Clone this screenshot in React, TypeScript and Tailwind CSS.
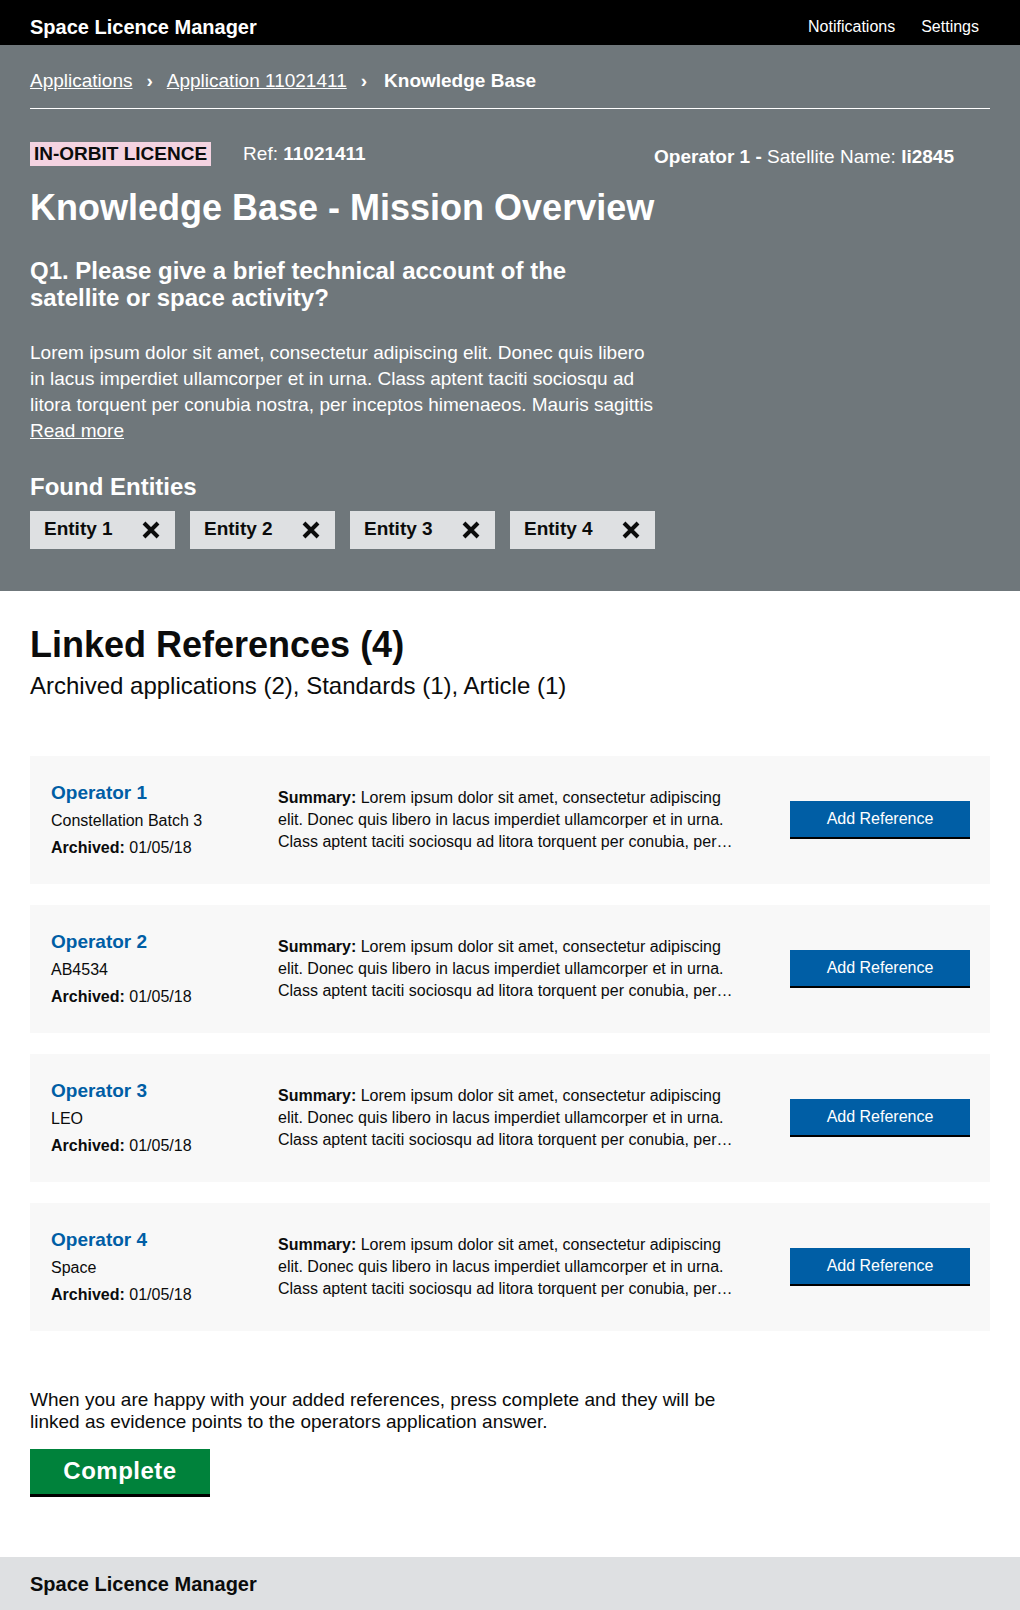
import React from 'react';

const entities = ['Entity 1', 'Entity 2', 'Entity 3', 'Entity 4'];

const references = [
  { operator: 'Operator 1', detail: 'Constellation Batch 3', archived: '01/05/18' },
  { operator: 'Operator 2', detail: 'AB4534', archived: '01/05/18' },
  { operator: 'Operator 3', detail: 'LEO', archived: '01/05/18' },
  { operator: 'Operator 4', detail: 'Space', archived: '01/05/18' },
];

const description =
  'Lorem ipsum dolor sit amet, consectetur adipiscing elit. Donec quis libero in lacus imperdiet ullamcorper et in urna. Class aptent taciti sociosqu ad litora torquent per conubia nostra, per inceptos himenaeos. Mauris sagittis';

// shortened summary shown on each reference card
const summary =
  'Lorem ipsum dolor sit amet, consectetur adipiscing elit. Donec quis libero in lacus imperdiet ullamcorper et in urna. Class aptent taciti sociosqu ad litora torquent per conubia, per…';

function CrossIcon() {
  return (
    <svg width="20" height="20" viewBox="0 0 20 20" className="shrink-0">
      <path d="M3 3 L17 17 M17 3 L3 17" stroke="#0b0c0c" strokeWidth="4" strokeLinecap="butt" />
    </svg>
  );
}

function Chevron() {
  return <span className="mx-[14px] font-bold text-white">›</span>;
}

export default function App() {
  return (
    <div className="min-h-[1610px] flex flex-col bg-white text-[#0b0c0c] font-['Liberation_Sans',Arial,sans-serif]">
      {/* top bar */}
      <header className="h-[45px] bg-black flex items-center justify-between pl-[30px] pr-[41px] pt-[8px]">
        <span className="text-white font-bold text-[20px]">Space Licence Manager</span>
        <nav className="flex gap-[26px] text-white text-[16px]">
          <span>Notifications</span>
          <span>Settings</span>
        </nav>
      </header>

      {/* grey banner */}
      <section className="bg-[#6f777b] px-[30px] pb-[42px] text-white">
        <div className="pt-[24px] pb-[15px] border-b border-white flex items-center text-[19px] leading-[24px]">
          <a className="underline">Applications</a>
          <Chevron />
          <a className="underline">Application 11021411</a>
          <Chevron />
          <span className="font-bold ml-[3px]">Knowledge Base</span>
        </div>

        <div className="flex items-start justify-between mt-[31px] pr-[36px]">
          <div className="flex items-center">
            <span className="bg-[#f4d3e1] text-[#0b0c0c] font-bold text-[19px] leading-[24px] px-[4px]">IN-ORBIT LICENCE</span>
            <span className="ml-[32px] text-[19px]">
              Ref: <span className="font-bold">11021411</span>
            </span>
          </div>
          <div className="text-[19px] mt-[3px]">
            <span className="font-bold">Operator 1 - </span>Satellite Name: <span className="font-bold">li2845</span>
          </div>
        </div>

        <div className="w-[630px]">
          <h1 className="mt-[16px] font-bold text-[36px] leading-[40px]">Knowledge Base - Mission Overview</h1>
          <h2 className="mt-[29px] font-bold text-[24px] leading-[27px]">
            Q1. Please give a brief technical account of the
            <br />
            satellite or space activity?
          </h2>
          <p className="mt-[29px] text-[19px] leading-[26px]">
            {description}
            <br />
            <a className="underline">Read more</a>
          </p>
          <h3 className="mt-[28px] font-bold text-[24px] leading-[30px]">Found Entities</h3>
        </div>

        <div className="mt-[9px] flex gap-[15px]">
          {entities.map((e) => (
            <div key={e} className="w-[145px] h-[38px] bg-[#dee0e2] flex items-center justify-between pl-[14px] pr-[14px] text-[#0b0c0c] font-bold text-[19px]">
              <span>{e}</span>
              <CrossIcon />
            </div>
          ))}
        </div>
      </section>

      {/* linked references */}
      <main className="px-[30px] pt-[34px] flex-1">
        <h2 className="font-bold text-[36px] leading-[40px]">Linked References (4)</h2>
        <p className="mt-[6px] text-[24px] leading-[30px]">Archived applications (2), Standards (1), Article (1)</p>

        <div className="mt-[55px] flex flex-col gap-[21px]">
          {references.map((r) => (
            <div key={r.operator} className="h-[128px] bg-[#f8f8f8] flex items-center px-[20px]">
              <div className="w-[228px] shrink-0 pl-[1px]">
                <div className="text-[#005ea5] font-bold text-[19px] leading-[24px]">{r.operator}</div>
                <div className="mt-[4px] text-[16px] leading-[23px]">{r.detail}</div>
                <div className="mt-[4px] text-[16px] leading-[23px]">
                  <span className="font-bold">Archived:</span> {r.archived}
                </div>
              </div>
              <p className="w-[455px] shrink-0 text-[16px] leading-[22px]">
                <span className="font-bold">Summary:</span> {summary}
              </p>
              <button className="ml-auto w-[180px] h-[38px] bg-[#005ea5] border-b-2 border-black text-white text-[16px]">
                Add Reference
              </button>
            </div>
          ))}
        </div>

        <p className="mt-[58px] w-[700px] text-[19px] leading-[22px]">
          When you are happy with your added references, press complete and they will be linked as evidence points to the operators application answer.
        </p>
        <button className="mt-[16px] w-[180px] h-[48px] bg-[#00823b] border-b-[3px] border-black text-white font-bold text-[24px] tracking-[0.5px]">
          Complete
        </button>
      </main>

      <footer className="mt-[60px] h-[53px] bg-[#dee0e2] flex items-center px-[30px]">
        <span className="font-bold text-[20px]">Space Licence Manager</span>
      </footer>
    </div>
  );
}
